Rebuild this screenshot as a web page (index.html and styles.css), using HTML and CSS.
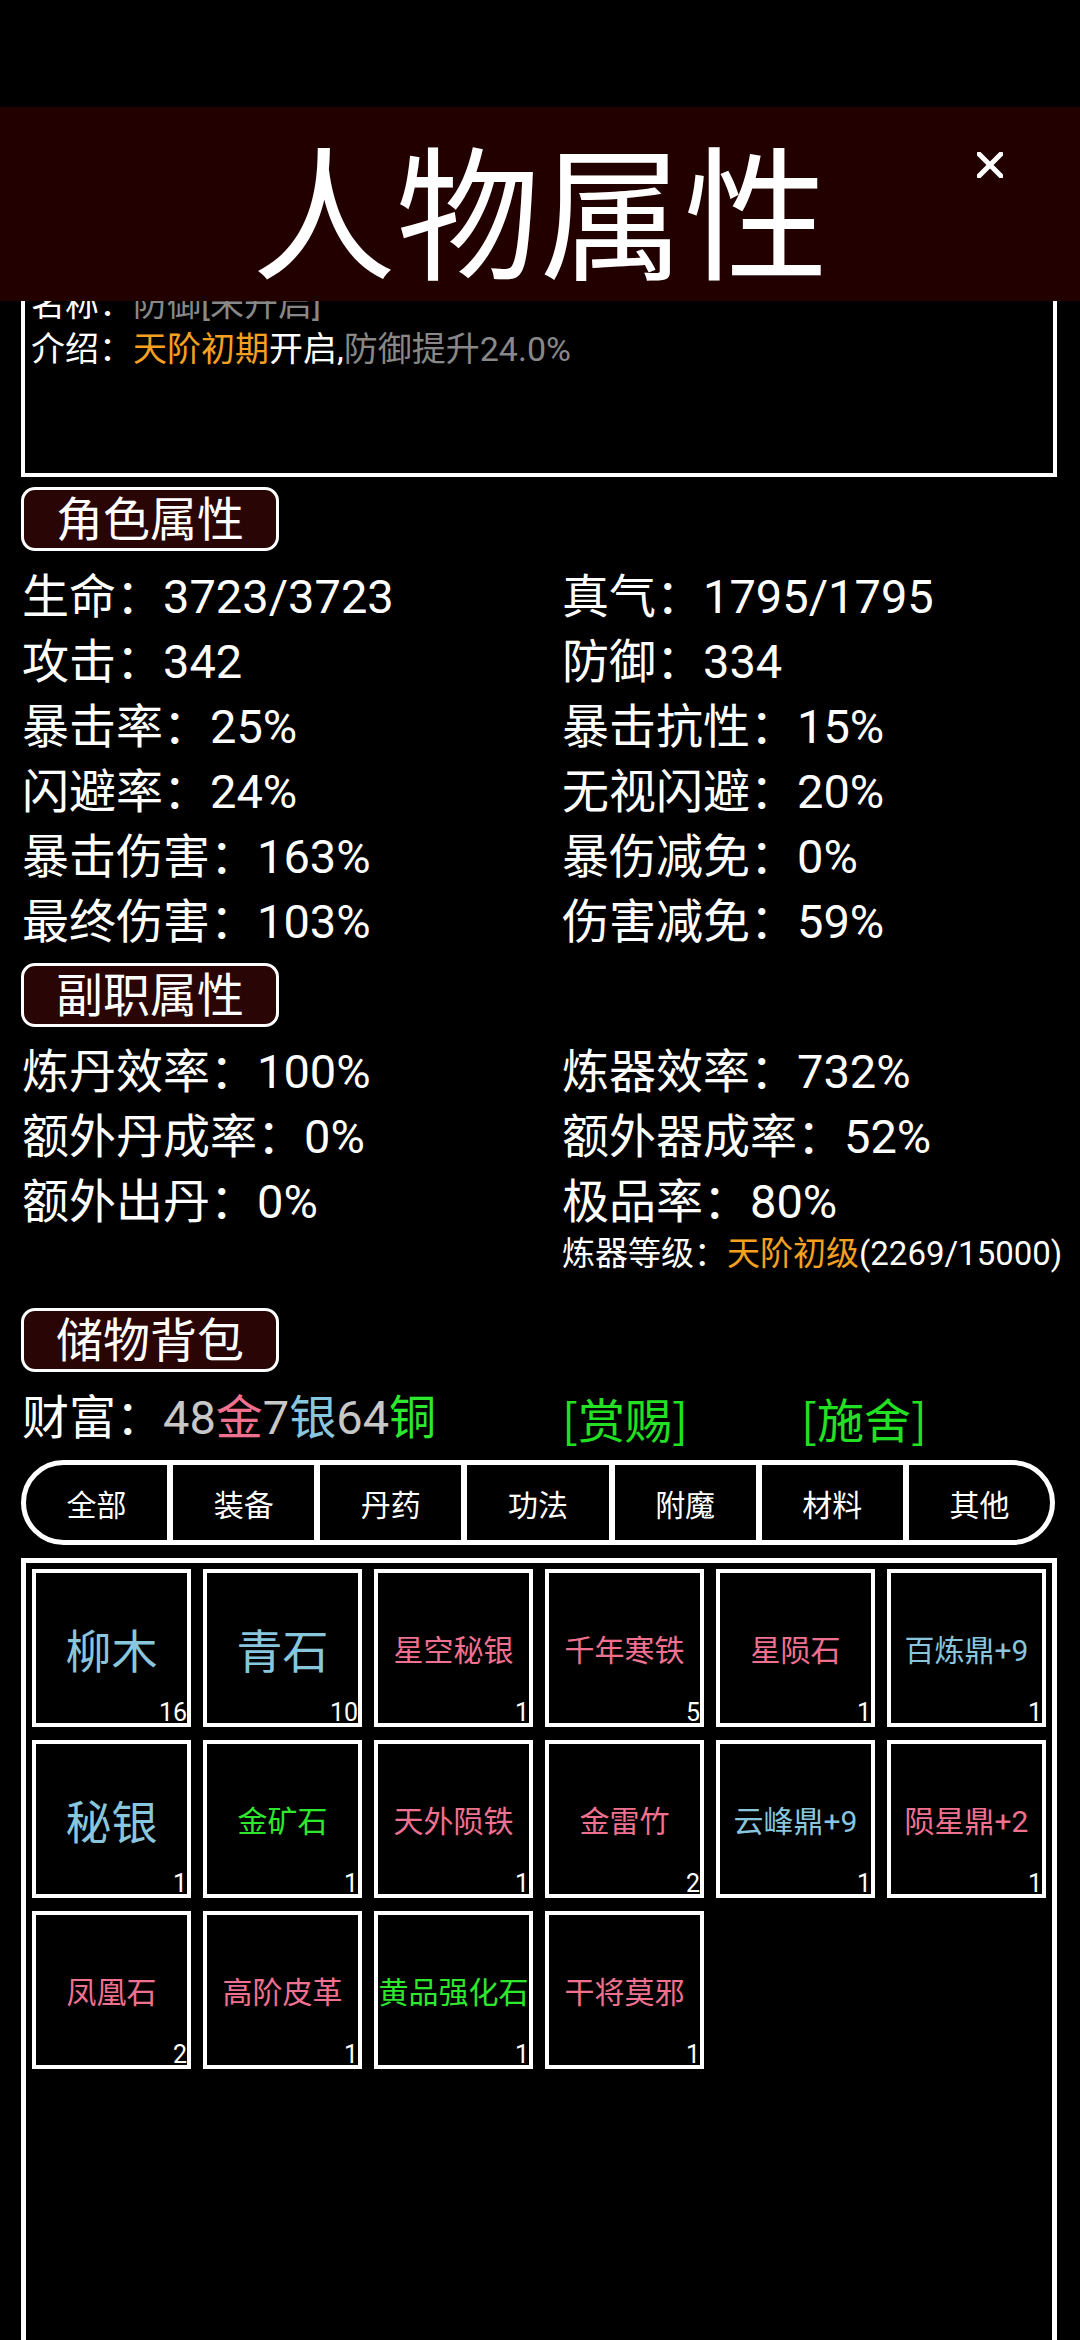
FILE: index.html
```html
<!DOCTYPE html>
<html lang="zh-CN">
<head>
<meta charset="utf-8">
<title>人物属性</title>
<link rel="stylesheet" href="styles.css">
</head>
<body>
<div class="page">
  <header class="titlebar">
    <div class="title">人物属性</div>
    <svg class="close" viewBox="0 0 26 26" width="26" height="26">
      <line x1="2" y1="2" x2="24" y2="24" stroke="#fff" stroke-width="5" stroke-linecap="square"/>
      <line x1="24" y1="2" x2="2" y2="24" stroke="#fff" stroke-width="5" stroke-linecap="square"/>
    </svg>
  </header>

  <main class="content">
    <section class="info">
      <div>名称：<span class="gray">防御[未开启]</span></div>
      <div>介绍：<span class="orange">天阶初期</span>开启,<span class="gray">防御提升24.0%</span></div>
    </section>

    <div class="pill">角色属性</div>
    <div class="stats first">
      <div>生命：3723/3723</div><div>真气：1795/1795</div>
      <div>攻击：342</div><div>防御：334</div>
      <div>暴击率：25%</div><div>暴击抗性：15%</div>
      <div>闪避率：24%</div><div>无视闪避：20%</div>
      <div>暴击伤害：163%</div><div>暴伤减免：0%</div>
      <div>最终伤害：103%</div><div>伤害减免：59%</div>
    </div>

    <div class="pill second">副职属性</div>
    <div class="stats">
      <div>炼丹效率：100%</div><div>炼器效率：732%</div>
      <div>额外丹成率：0%</div><div>额外器成率：52%</div>
      <div>额外出丹：0%</div><div>极品率：80%</div>
    </div>
    <div class="level">炼器等级：<span class="orange">天阶初级</span>(2269/15000)</div>

    <div class="pill third">储物背包</div>
    <div class="wealth">
      <div class="w-main">财富：<span class="lgray">48</span><span class="pink">金</span><span class="lgray">7</span><span class="blue">银</span><span class="lgray">64</span><span class="green">铜</span></div>
      <div class="w-btn reward">[赏赐]</div>
      <div class="w-btn">[施舍]</div>
    </div>

    <nav class="tabs">
      <div class="tab">全部</div>
      <div class="tab">装备</div>
      <div class="tab">丹药</div>
      <div class="tab">功法</div>
      <div class="tab">附魔</div>
      <div class="tab">材料</div>
      <div class="tab">其他</div>
    </nav>

    <section class="bag">
      <div class="cell big blue">柳木<span class="count">16</span></div>
      <div class="cell big blue">青石<span class="count">10</span></div>
      <div class="cell pink">星空秘银<span class="count">1</span></div>
      <div class="cell pink">千年寒铁<span class="count">5</span></div>
      <div class="cell pink">星陨石<span class="count">1</span></div>
      <div class="cell blue">百炼鼎+9<span class="count">1</span></div>

      <div class="cell big blue">秘银<span class="count">1</span></div>
      <div class="cell green">金矿石<span class="count">1</span></div>
      <div class="cell pink">天外陨铁<span class="count">1</span></div>
      <div class="cell pink">金雷竹<span class="count">2</span></div>
      <div class="cell blue">云峰鼎+9<span class="count">1</span></div>
      <div class="cell pink">陨星鼎+2<span class="count">1</span></div>

      <div class="cell pink">凤凰石<span class="count">2</span></div>
      <div class="cell pink">高阶皮革<span class="count">1</span></div>
      <div class="cell green">黄品强化石<span class="count">1</span></div>
      <div class="cell pink">干将莫邪<span class="count">1</span></div>
    </section>
  </main>
</div>
</body>
</html>
```
FILE: styles.css
```css
html, body {
  margin: 0;
  padding: 0;
  background: #000;
}

body {
  width: 1080px;
  overflow: hidden;
  color: #fff;
  font-family: Roboto, "Noto Sans CJK SC", sans-serif;
}

.page {
  position: relative;
  width: 1080px;
  height: 2340px;
  overflow: hidden;
}

.titlebar {
  position: absolute;
  top: 107px;
  left: 0;
  width: 1080px;
  height: 194px;
  background: #220000;
  display: flex;
  align-items: center;
  justify-content: center;
  z-index: 2;
}

.title {
  font-family: "Noto Sans CJK SC", sans-serif;
  font-size: 144px;
  line-height: 1;
  padding-top: 4px;
}

.close {
  position: absolute;
  left: 977px;
  top: 45px;
}

.content {
  padding: 0 23px 0 21px;
}

.info {
  margin-top: 230px;
  border: 4px solid #fff;
  padding: 48px 6px 101px 6px;
  font-size: 34px;
  line-height: 45px;
  white-space: nowrap;
}

.gray { color: #888; }
.orange { color: #f5a020; }
.lgray { color: #c8c8c8; }
.pink { color: #f0708f; }
.blue { color: #88c6de; }
.green { color: #2ee82e; }

.pill {
  margin-top: 10px;
  width: 258px;
  height: 64px;
  box-sizing: border-box;
  border: 3px solid #fff;
  border-radius: 14px;
  background: #2a0505;
  display: flex;
  align-items: center;
  justify-content: center;
  font-size: 47px;
  line-height: 1;
}

.pill.second { margin-top: 9px; }
.pill.third { margin-top: 34px; }

.stats {
  display: grid;
  grid-template-columns: 540px 1fr;
  margin-top: 12px;
  padding-left: 1px;
  font-size: 47px;
  line-height: 65px;
  white-space: nowrap;
}

.stats.first { margin-top: 13px; }

.level {
  padding-left: 541px;
  font-size: 33px;
  line-height: 40px;
  white-space: nowrap;
}

.wealth {
  display: flex;
  margin-top: 13px;
  padding-left: 1px;
  font-size: 47px;
  line-height: 65px;
  white-space: nowrap;
}

.w-main { width: 540px; }
.w-btn {
  color: #22e022;
  font-family: "Noto Sans CJK SC", sans-serif;
}
.w-btn.reward { width: 239px; }

.tabs {
  margin-top: 10px;
  margin-right: 2px;
  height: 85px;
  box-sizing: border-box;
  border: 5px solid #fff;
  border-radius: 43px;
  display: flex;
  overflow: hidden;
}

.tab {
  flex: 1;
  display: flex;
  align-items: center;
  justify-content: center;
  font-size: 30px;
}

.tab + .tab {
  border-left: 6px solid #fff;
}

.bag {
  margin-top: 13px;
  border: 5px solid #fff;
  padding: 6px;
  min-height: 900px;
  display: grid;
  grid-template-columns: repeat(6, 1fr);
  column-gap: 12px;
  row-gap: 13px;
  align-content: start;
}

.cell {
  position: relative;
  height: 158px;
  box-sizing: border-box;
  border: 4px solid #fff;
  display: flex;
  align-items: center;
  justify-content: center;
  font-size: 30px;
  white-space: nowrap;
  overflow: visible;
}

.cell.big { font-size: 46px; }

.count {
  position: absolute;
  right: 0;
  bottom: -2px;
  font-size: 25px;
  line-height: 1;
  color: #fff;
}
```
